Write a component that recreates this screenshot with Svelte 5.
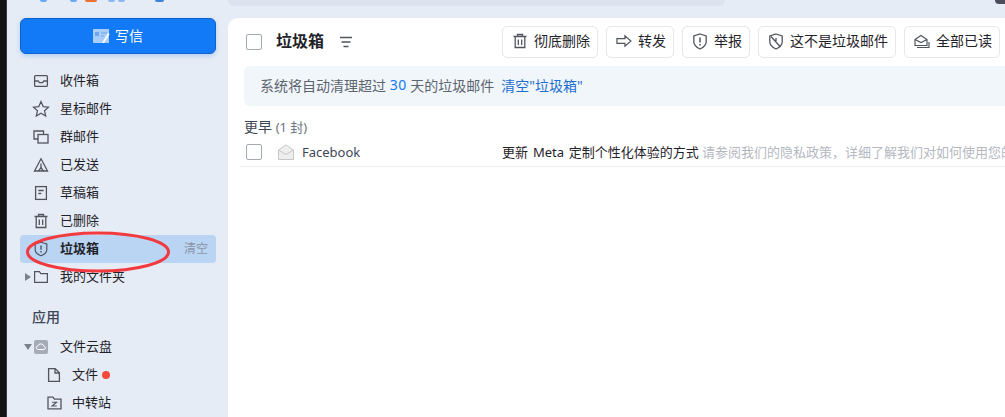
<script>
	const folders = [
		{ name: '收件箱', icon: 'inbox' },
		{ name: '星标邮件', icon: 'star' },
		{ name: '群邮件', icon: 'group' },
		{ name: '已发送', icon: 'sent' },
		{ name: '草稿箱', icon: 'draft' },
		{ name: '已删除', icon: 'trash' }
	];
	const topDots = [
		{ w: 7, c: '#6aa9f5', gap: 23 },
		{ w: 7, c: '#6aa9f5', gap: 8 },
		{ w: 12, c: '#f0702f', gap: 11 },
		{ w: 7, c: '#8db8ee', gap: 3 },
		{ w: 7, c: '#8db8ee', gap: 30 },
		{ w: 9, c: '#3d82d8', gap: 0 }
	];
</script>

{#snippet trashIcon(size)}
	<svg width={size} height={size} viewBox="0 0 16 16" fill="none" stroke="#50555e" stroke-width="1.3">
		<path d="M1.5 3.500h13M5.500 3.500V1.500h5v2M3.200 3.500v11h9.600v-11M6.300 6.500v5.500M9.700 6.500v5.500" />
	</svg>
{/snippet}

<div class="page">
	<div class="edge"></div>

	<aside class="sidebar">
		<div class="top-icons">
			{#each topDots as d}
				<span style="width:{d.w}px;background:{d.c};margin-right:{d.gap}px"></span>
			{/each}
		</div>

		<button class="compose">
			<svg width="17" height="16" viewBox="0 0 17 16">
				<rect x="0" y="1" width="16" height="14" fill="#a9cdfb" />
				<rect x="2" y="4" width="4" height="4" fill="#6ea6f0" />
				<path d="M8 5h6M8 8h3" stroke="#6ea6f0" stroke-width="1" />
				<path d="M9 15l6-10 1.600 1-5.600 9z" fill="#fff" />
			</svg>
			<span>写信</span>
		</button>

		<nav class="nav">
			{#each folders as f}
				<div class="row">
					<span class="ico">
						{#if f.icon === 'inbox'}
							<svg width="16" height="16" viewBox="0 0 16 16" fill="none" stroke="#50555e" stroke-width="1.300">
								<rect x="1.600" y="2.600" width="12.800" height="10.800" rx="1" />
								<path d="M1.600 8h3.600l1.200 1.600h3.200L10.800 8h3.600" />
							</svg>
						{:else if f.icon === 'star'}
							<svg width="18" height="18" viewBox="0 0 18 18" fill="none" stroke="#50555e" stroke-width="1.200">
								<path d="M9 1.600l2.200 5 5.300.5-4 3.600 1.200 5.400L9 13.300l-4.700 2.800 1.200-5.400-4-3.600 5.300-.5z" />
							</svg>
						{:else if f.icon === 'group'}
							<svg width="16" height="16" viewBox="0 0 16 16" fill="none" stroke="#50555e" stroke-width="1.300">
								<path d="M5 10H1V2h9.500v3.500" />
								<rect x="5" y="5.500" width="10" height="8.500" />
							</svg>
						{:else if f.icon === 'sent'}
							<svg width="16" height="16" viewBox="0 0 16 16" fill="none" stroke="#50555e" stroke-width="1.300">
								<path d="M8 1.800L14.500 14h-13zM8 6.500v4" />
								<path d="M5.500 14L8 10.500l2.500 3.500" />
							</svg>
						{:else if f.icon === 'draft'}
							<svg width="16" height="16" viewBox="0 0 16 16" fill="none" stroke="#50555e" stroke-width="1.300">
								<rect x="2.600" y="1.600" width="10.800" height="12.800" />
								<path d="M5.300 5.500h5.400M5.300 8.500h3" />
							</svg>
						{:else}
							{@render trashIcon(16)}
						{/if}
					</span>
					<span class="txt">{f.name}</span>
				</div>
			{/each}

			<div class="row active">
				<span class="ico">
					<svg width="14" height="16" viewBox="0 0 14 16" fill="none" stroke="#50555e" stroke-width="1.200">
						<path d="M7 1.200l5.800 1.800v5.500c0 3-2.600 5-5.800 6.300C3.800 13.500 1.200 11.500 1.200 8.500V3z" />
						<path d="M7 4.500v4.200M7 10v1.400" stroke-width="1.400" />
					</svg>
				</span>
				<span class="txt label">垃圾箱</span>
				<span class="txt clear">清空</span>
			</div>

			<div class="row">
				<span class="caret right"></span>
				<span class="ico">
					<svg width="16" height="14" viewBox="0 0 16 14" fill="none" stroke="#50555e" stroke-width="1.200">
						<path d="M1.600 1.600h4.800l1.400 2h6.600v8.800H1.600z" />
					</svg>
				</span>
				<span class="txt">我的文件夹</span>
			</div>
		</nav>

		<div class="section">应用</div>

		<div class="row">
			<span class="caret down"></span>
			<span class="ico">
				<svg width="14" height="14" viewBox="0 0 14 14">
					<rect width="14" height="14" rx="2" fill="#a5acb8" />
					<path d="M3.500 9.500a1.800 1.800 0 0 1 .3-3.500 3.300 3.300 0 0 1 6.300.4 1.600 1.600 0 0 1 .2 3.100z" fill="none" stroke="#fff" stroke-width="1" />
				</svg>
			</span>
			<span class="txt">文件云盘</span>
		</div>
		<div class="row sub">
			<span class="ico">
				<svg width="14" height="16" viewBox="0 0 14 16" fill="none" stroke="#50555e" stroke-width="1.300">
					<path d="M1.600 1.600h6.600l4.200 4.200v8.600H1.600zM8 1.600v4.400h4.400" />
				</svg>
			</span>
			<span class="txt">文件</span>
			<span class="dot"></span>
		</div>
		<div class="row sub">
			<span class="ico">
				<svg width="15" height="14" viewBox="0 0 15 14" fill="none" stroke="#50555e" stroke-width="1.300">
					<path d="M1 1.200h5l1.400 2H14v9.600H1z" />
					<path d="M5 6.300h4.600L5 10h4.800" stroke-width="1.100" />
				</svg>
			</span>
			<span class="txt">中转站</span>
		</div>
	</aside>

	<div class="content">
		<div class="topbar">
			<div class="search"></div>
			<div class="avatar"></div>
		</div>

		<main class="panel">
			<div class="toolbar">
				<span class="check"></span>
				<h1>垃圾箱</h1>
				<svg class="sort" width="12" height="12" viewBox="0 0 12 12" fill="none" stroke="#50555e" stroke-width="1.500">
					<path d="M0 1.500h12M1.500 6h9M3.500 10.500h5" />
				</svg>

				<div class="actions">
					<button class="btn">
						{@render trashIcon(16)}
						彻底删除
					</button>
					<button class="btn">
						<svg width="16" height="14" viewBox="0 0 17 14" fill="none" stroke="#50555e" stroke-width="1.300">
							<path d="M1 4.500h8.500V1.500L15.800 7l-6.300 5.500v-3H1z" />
						</svg>
						转发
					</button>
					<button class="btn">
						<svg width="16" height="17" viewBox="-.5 0 16 17" fill="none" stroke="#50555e" stroke-width="1.300">
							<path d="M7.500 1l6.200 2v6c0 3-2.800 5.300-6.200 7-3.400-1.700-6.200-4-6.200-7V3z" />
							<path d="M7.500 4.500v5M7.500 11v1.500" stroke-width="1.500" />
						</svg>
						举报
					</button>
					<button class="btn">
						<svg width="16" height="17" viewBox="-.5 0 16 17" fill="none" stroke="#50555e" stroke-width="1.300">
							<path d="M7.500 1l6.200 2v6c0 3-2.800 5.300-6.200 7-3.400-1.700-6.200-4-6.200-7V3z" />
							<path d="M2.500 3.500l9.500 10.500M7.500 5v3" />
						</svg>
						这不是垃圾邮件
					</button>
					<button class="btn">
						<svg width="16" height="15" viewBox="0 0 16 15" fill="none" stroke="#50555e" stroke-width="1.200">
							<path d="M1 5.500L7 1.500l6 4v6H1zM1 5.500l6 3 6-3" />
							<path d="M3 13.500h12V8" />
						</svg>
						全部已读
					</button>
				</div>
			</div>

			<div class="notice">
				系统将自动清理超过 <em>30</em> 天的垃圾邮件<a href="#clear">清空"垃圾箱"</a>
			</div>

			<div class="group-title">更早 <span>(1 封)</span></div>

			<div class="mail">
				<span class="check"></span>
				<svg class="env" width="16" height="16" viewBox="0 0 16 16">
					<path d="M.5 6L8 .8 15.500 6v9.500H.5z" fill="#eeeeee" stroke="#c6c6c6" />
					<path d="M.5 6L8 10.500 15.500 6" fill="none" stroke="#c6c6c6" />
				</svg>
				<span class="sender">Facebook</span>
				<span class="subject">更新 Meta 定制个性化体验的方式</span>
				<span class="preview">请参阅我们的隐私政策，详细了解我们对如何使用您的信息</span>
			</div>
		</main>
	</div>

	<!-- red annotation drawn over the screenshot -->
	<svg class="mark" width="160" height="50" viewBox="0 0 160 50" fill="none">
		<ellipse cx="80" cy="25" rx="70.500" ry="19" stroke="#f23a3e" stroke-width="3" />
	</svg>
</div>

<style>
	:global(body) {
		margin: 0;
		overflow: hidden;
	}

	.page {
		position: relative;
		display: flex;
		width: 1005px;
		height: 417px;
		overflow: hidden;
		background: #e6ecf5;
		font-family: "Noto Sans", "Noto Sans CJK SC", sans-serif;
		font-size: 13px;
		color: #1f2329;
	}

	.edge {
		flex: none;
		width: 7px;
		background: #141414;
		border-right: 1px solid #3a3a3a;
		box-sizing: border-box;
	}

	.sidebar {
		flex: none;
		width: 221px;
		box-sizing: border-box;
		padding: 0 12px 0 13px;
	}

	.top-icons {
		display: flex;
		height: 18px;
		padding-left: 20px;
	}

	.top-icons span {
		height: 2px;
		border-radius: 0 0 3px 3px;
	}

	.compose {
		display: flex;
		align-items: center;
		justify-content: center;
		gap: 5px;
		width: 196px;
		height: 36px;
		padding: 0;
		background: #1279f7;
		border: 1px solid #0f62c9;
		border-radius: 6px;
		box-shadow: 0 2px 5px rgba(18, 121, 247, 0.25);
		color: #fff;
		font: inherit;
		font-size: 14px;
	}

	.compose span {
		margin-bottom: 3px;
	}

	.nav {
		margin-top: 13px;
	}

	.row {
		position: relative;
		display: flex;
		align-items: center;
		height: 28px;
		padding-left: 12px;
		line-height: 1;
		white-space: nowrap;
	}

	.txt {
		margin-bottom: 1px;
	}

	.ico {
		display: flex;
		align-items: center;
		justify-content: center;
		flex: none;
		width: 18px;
		margin-right: 10px;
	}

	.active {
		background: #bad4f3;
		border-radius: 4px;
	}

	.label {
		font-weight: 700;
	}

	.clear {
		margin-left: auto;
		margin-right: 8px;
		font-size: 12px;
		color: #8a95a5;
	}

	.caret {
		position: absolute;
		width: 0;
		height: 0;
	}

	.caret.right {
		left: 5px;
		border-left: 6px solid #7c828c;
		border-top: 4px solid transparent;
		border-bottom: 4px solid transparent;
	}

	.caret.down {
		left: 4px;
		border-top: 6px solid #7c828c;
		border-left: 4px solid transparent;
		border-right: 4px solid transparent;
	}

	.section {
		margin-top: 14px;
		margin-bottom: 4px;
		padding-left: 12px;
		height: 24px;
		line-height: 24px;
		font-size: 14px;
		font-weight: 500;
		color: #3c4654;
	}

	.sub {
		padding-left: 25px;
	}

	.sub .ico {
		margin-right: 9px;
	}

	.dot {
		width: 8px;
		height: 8px;
		margin-left: 4px;
		background: #f4493a;
		border-radius: 50%;
	}

	.content {
		flex: 1;
		min-width: 0;
		display: flex;
		flex-direction: column;
	}

	.topbar {
		display: flex;
		justify-content: space-between;
		height: 18px;
		flex: none;
	}

	.search {
		width: 497px;
		height: 6px;
		background: #dce3ee;
		border-radius: 0 0 10px 10px;
	}

	.avatar {
		width: 10px;
		height: 4px;
		background: #4c4c5c;
		border-radius: 0 0 0 6px;
	}

	.panel {
		flex: 1;
		min-width: 0;
		background: #fff;
		border-top-left-radius: 10px;
		overflow: hidden;
		padding: 8px 0 0 16px;
	}

	.toolbar {
		display: flex;
		align-items: center;
		height: 32px;
	}

	.check {
		flex: none;
		box-sizing: border-box;
		width: 16px;
		height: 16px;
		margin-left: 2px;
		background: #fff;
		border: 1px solid #a3a9b3;
		border-radius: 2px;
	}

	h1 {
		margin: 0 0 2px 14px;
		font-size: 16px;
		font-weight: 700;
		line-height: 1;
		color: #1f2329;
	}

	.sort {
		margin-left: 16px;
	}

	.actions {
		display: flex;
		gap: 8px;
		margin-left: auto;
		margin-right: 5px;
	}

	.btn {
		display: flex;
		align-items: center;
		justify-content: center;
		gap: 6px;
		height: 32px;
		padding: 0 7px 2px 9px;
		background: #fff;
		border: 1px solid #e4e6ea;
		border-radius: 5px;
		color: #1f2329;
		font: inherit;
		font-size: 14px;
		line-height: 1;
		white-space: nowrap;
	}

	.notice {
		display: flex;
		align-items: center;
		box-sizing: border-box;
		height: 40px;
		margin-top: 8px;
		padding: 0 0 3px 16px;
		background: #f1f6fa;
		border-radius: 6px 0 0 6px;
		color: #5c6470;
		font-size: 14px;
		white-space: pre;
	}

	.notice em {
		font-style: normal;
		letter-spacing: 0.5px;
		color: #1279f7;
	}

	.notice a {
		margin-left: 7px;
		color: #1f6fd1;
		text-decoration: none;
	}

	.group-title {
		margin-top: 11px;
		height: 21px;
		line-height: 20px;
		font-size: 14px;
		color: #3c4654;
	}

	.group-title span {
		font-size: 13px;
		color: #6d7480;
	}

	.mail {
		display: flex;
		align-items: center;
		height: 28px;
		margin-left: -4px;
		padding-left: 4px;
		border-bottom: 1px solid #eceef1;
		white-space: nowrap;
	}

	.env {
		flex: none;
		margin-left: 16px;
	}

	.sender {
		flex: none;
		width: 200px;
		margin-left: 8px;
		color: #3c4654;
	}

	.subject {
		flex: none;
		margin-bottom: 2px;
		word-spacing: 1.5px;
		color: #1f2329;
	}

	.preview {
		margin-left: 3px;
		margin-bottom: 2px;
		color: #b4b8bf;
	}

	.mark {
		position: absolute;
		left: 18px;
		top: 227px;
		pointer-events: none;
	}
</style>
